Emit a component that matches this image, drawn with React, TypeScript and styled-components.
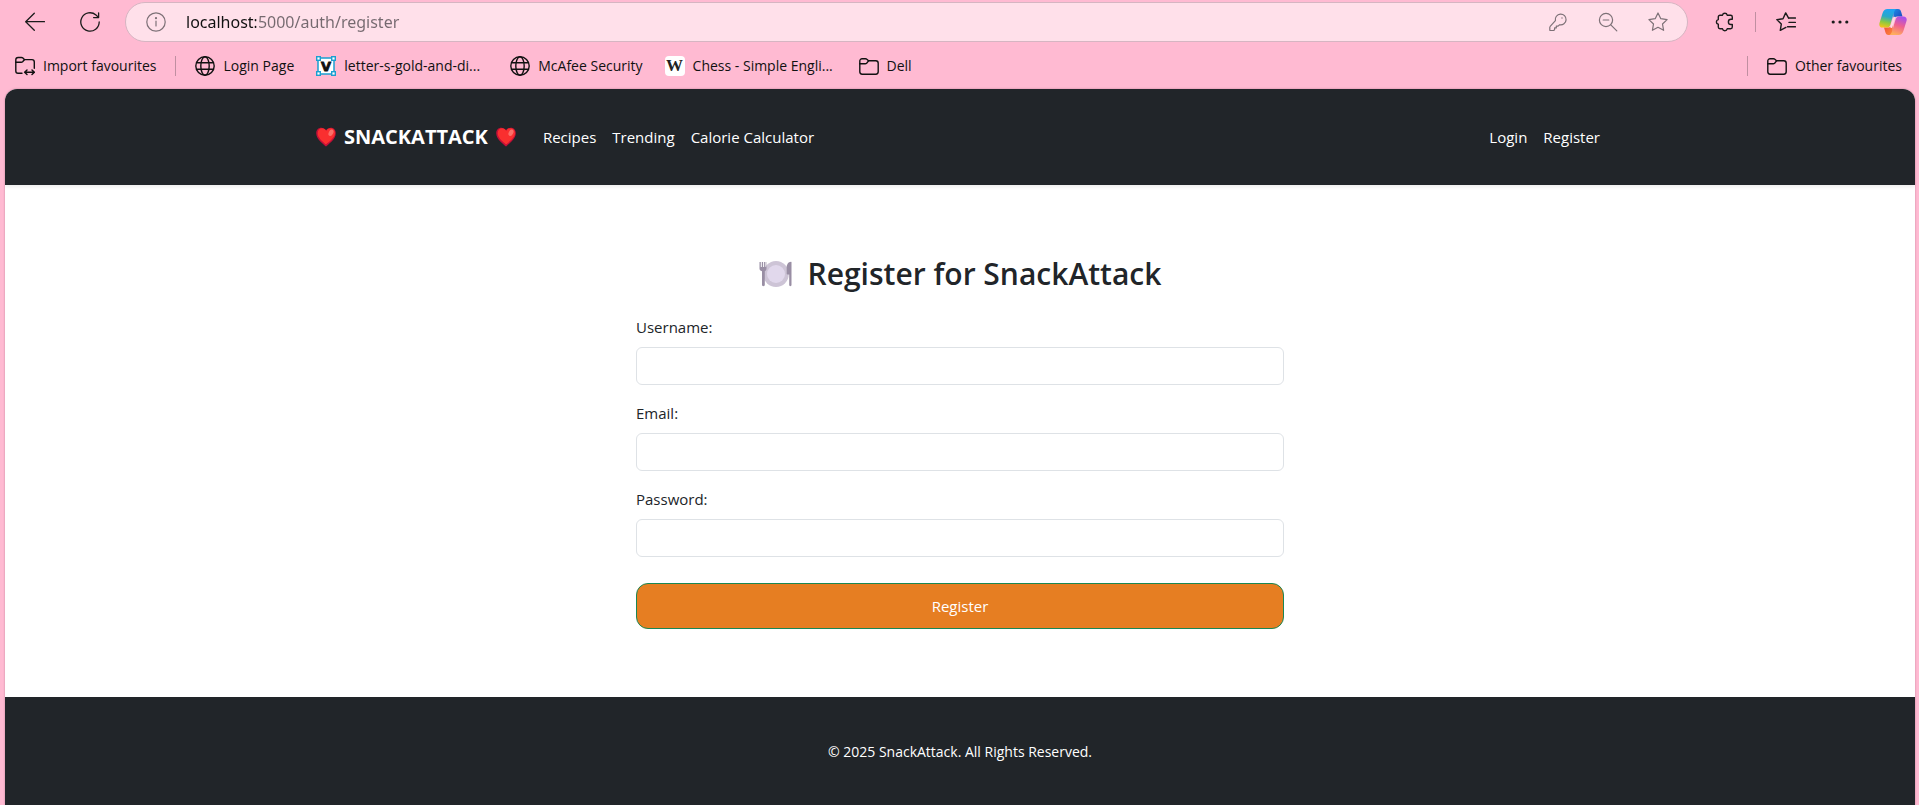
import React from "react";
import styled, { createGlobalStyle } from "styled-components";

const GlobalStyle = createGlobalStyle`
  *, *::before, *::after { box-sizing: border-box; }
  body {
    margin: 0;
    background: #ffbad2;
    color: #212529;
    font-family: "Segoe UI", "Open Sans", "Noto Sans", sans-serif;
    font-size: 15px;
    line-height: 24px;
  }
  svg { display: block; flex: none; }
`;

/* ---------- browser window ---------- */

const Window = styled.div`
  display: flex;
  flex-direction: column;
  min-height: 100vh;
`;

const Toolbar = styled.div`
  display: flex;
  align-items: center;
  padding: 2px 12px 0 25px;
  color: #1b1b1b;
`;

const IconButton = styled.button<{ $after?: number }>`
  display: flex;
  flex: none;
  padding: 0;
  margin-right: ${(p) => p.$after ?? 0}px;
  border: 0;
  background: none;
  color: inherit;
`;

const AddressBar = styled.div`
  display: flex;
  flex: 1;
  align-items: center;
  height: 40px;
  margin-right: 27px;
  padding: 0 19px 0 20px;
  border: 1px solid #d6b5c2;
  border-radius: 20px;
  background: #ffe0ea;
  color: #7d7177;
`;

const AddressInput = styled.input`
  flex: 1;
  min-width: 0;
  padding: 0;
  border: 0;
  outline: 0;
  background: linear-gradient(90deg, #111 0 70px, #75696f 70px);
  background-clip: text;
  -webkit-background-clip: text;
  color: transparent;
  font: 16px/24px "Segoe UI", "Noto Sans", sans-serif;
`;

const Separator = styled.span<{ $gap: number }>`
  flex: none;
  width: 1px;
  height: 20px;
  margin: 0 ${(p) => p.$gap}px;
  background: #c08fa1;
`;

const Favourites = styled.nav`
  display: flex;
  align-items: center;
  height: 47px;
  padding: 1px 17px 0 15px;
`;

const FavouriteList = styled.div`
  display: flex;
  flex: 1;
  gap: 22px;
`;

const Favourite = styled.a`
  display: flex;
  align-items: center;
  gap: 8px;
  color: #111;
  font-size: 14px;
  line-height: 20px;
  text-decoration: none;
  white-space: nowrap;
`;

const LongLabel = styled.span`
  width: 144px;
`;

const SiteBadge = styled.span`
  display: flex;
  align-items: center;
  justify-content: center;
  width: 20px;
  height: 20px;
  border-radius: 4px;
  background: #fff;
  color: #222;
  font: 700 17px/20px "Liberation Serif", serif;
`;

/* ---------- site ---------- */

const Page = styled.div`
  display: flex;
  flex: 1;
  flex-direction: column;
  margin: 0 4px 0 5px;
  overflow: hidden;
  border-radius: 12px 12px 0 0;
  background: #fff;
  box-shadow: 0 0 2px rgba(90, 30, 60, 0.4);
`;

const Header = styled.header`
  display: flex;
  justify-content: center;
  background: #212529;
  box-shadow: 0 2px 4px rgba(0, 0, 0, 0.08);
`;

const HeaderInner = styled.div`
  display: flex;
  flex: 1;
  align-items: center;
  max-width: 1320px;
  height: 96px;
  padding: 0 20px 0 16px;
`;

const Brand = styled.a`
  display: flex;
  align-items: center;
  gap: 8px;
  margin-right: 27px;
  color: #fff;
  font-size: 20px;
  font-weight: 700;
  text-decoration: none;
`;

const Links = styled.nav<{ $end?: boolean }>`
  display: flex;
  gap: 16px;
  margin-left: ${(p) => (p.$end ? "auto" : "0")};
`;

const NavLink = styled.a`
  color: #fff;
  text-decoration: none;
  white-space: nowrap;
`;

const Main = styled.main`
  display: flex;
  justify-content: center;
  padding: 68px 16px;
`;

const Form = styled.form`
  display: flex;
  flex: 1;
  flex-direction: column;
  gap: 16px;
  max-width: 648px;
`;

const Title = styled.h2`
  display: flex;
  align-items: center;
  justify-content: center;
  gap: 16px;
  margin: 0 0 6px;
  padding-top: 2px;
  font-size: 30px;
  font-weight: 600;
  line-height: 38px;
`;

const Field = styled.div`
  display: flex;
  flex-direction: column;
  gap: 8px;
`;

const TextInput = styled.input`
  height: 38px;
  padding: 6px 12px;
  border: 1px solid #dee2e6;
  border-radius: 6px;
  background: #fff;
  font: inherit;
`;

const SubmitButton = styled.button`
  height: 46px;
  margin-top: 10px;
  border: 1px solid #198754;
  border-radius: 12px;
  background: #e67e22;
  color: #fff;
  font: inherit;
`;

const Footer = styled.footer`
  flex: 1;
  padding: 44px 16px 32px;
  background: #212529;
  color: #fff;
  font-size: 14px;
  line-height: 22px;
  text-align: center;
`;

/* ---------- icons ---------- */

const Icon = ({ size = 20, width = 1.3, children }: { size?: number; width?: number; children: React.ReactNode }) => (
  <svg width={size} height={size} viewBox="0 0 20 20" fill="none" stroke="currentColor" strokeWidth={width} strokeLinecap="round" strokeLinejoin="round" aria-hidden="true">
    {children}
  </svg>
);

const BackIcon = () => (
  <Icon>
    <path d="M9.3 1.2.7 9.7l8.6 8.5M.9 9.7h18.6" />
  </Icon>
);

const ReloadIcon = () => (
  <Icon>
    <path d="M19.2 10A9.2 9.2 0 1 1 16 3l2.4 2.4M18.6.8v4.8h-5" />
  </Icon>
);

const InfoIcon = () => (
  <Icon width={1.2}>
    <circle cx="10" cy="10" r="9.2" />
    <path d="M10 9v5" />
    <circle cx="10" cy="6.2" r=".5" fill="currentColor" />
  </Icon>
);

const KeyIcon = () => (
  <Icon width={1.2}>
    <path d="M7.4 8.6a5.4 5.4 0 1 1 4.2 4.2l-1.5 1.3H8.3v1.8H6.6v1.7l-.9.9H2.4a.6.6 0 0 1-.6-.6v-2.6c0-.5.1-.7.4-1z" />
    <circle cx="14" cy="6" r=".7" fill="currentColor" stroke="none" />
  </Icon>
);

const ZoomOutIcon = () => (
  <Icon width={1.2}>
    <circle cx="8" cy="8" r="6.6" />
    <path d="m12.8 12.8 6 6M5.2 8h5.6" />
  </Icon>
);

const StarIcon = () => (
  <Icon width={1.2}>
    <path d="m10 1 2.8 5.7 6.3.9-4.6 4.4 1.1 6.3-5.6-3-5.6 3L5.500 12 .9 7.600l6.300-.9z" />
  </Icon>
);

const PuzzleIcon = () => (
  <Icon width={1.4}>
    <path d="M5 3.200H7.500a2.400 2.400 0 0 1 4.700 0H15.600a1.700 1.700 0 0 1 1.700 1.700V7.300h-1.300a2.600 2.600 0 0 0 0 5.200h1.300v2.600a1.700 1.700 0 0 1-1.700 1.700H12.200a2.400 2.400 0 0 1-4.700 0H5a1.700 1.700 0 0 1-1.700-1.700V12.300a2.400 2.400 0 0 1 0-4.700V4.900a1.700 1.700 0 0 1 1.700-1.700z" />
  </Icon>
);

const FavouritesIcon = () => (
  <Icon width={1.4}>
    <path d="M12.600 6.200 9.700.9 7 6.700l-6.200.9 4.500 4.500-1 6.300 5.600-3" />
    <path d="M13 6h6.400M13 10.400h6.400M11.500 14.800h7.900" />
  </Icon>
);

const MoreIcon = () => (
  <svg width="18" height="20" viewBox="0 0 18 20" fill="currentColor" aria-hidden="true">
    <circle cx="2.200" cy="10" r="1.600" />
    <circle cx="9" cy="10" r="1.600" />
    <circle cx="15.800" cy="10" r="1.600" />
  </svg>
);

const CopilotIcon = () => (
  <svg width="28" height="28" viewBox="0 0 28 28" aria-hidden="true">
    <defs>
      <linearGradient id="cpLeft" x1="0.5" y1="0" x2="0.3" y2="1">
        <stop offset="0" stopColor="#1fa2f2" />
        <stop offset=".4" stopColor="#2aa8c8" />
        <stop offset=".72" stopColor="#8fc93f" />
        <stop offset="1" stopColor="#f3c518" />
      </linearGradient>
      <linearGradient id="cpRight" x1="0.7" y1="0" x2="0.4" y2="1">
        <stop offset="0" stopColor="#a44df0" />
        <stop offset=".5" stopColor="#f0608f" />
        <stop offset="1" stopColor="#ffae5c" />
      </linearGradient>
      <linearGradient id="cpTop" x1="0" y1="0" x2="1" y2="1">
        <stop offset="0" stopColor="#1b8ee8" />
        <stop offset="1" stopColor="#1f3fb8" />
      </linearGradient>
      <linearGradient id="cpBottom" x1="0" y1="0" x2="1" y2="1">
        <stop offset="0" stopColor="#ee4a3a" />
        <stop offset="1" stopColor="#ff8a3c" />
      </linearGradient>
    </defs>
    <path d="M14 1h5c1.800 0 2.700 1.200 3.200 3l1.300 4.600h-5.300c-2 0-3 1-3.600 2.800z" fill="url(#cpTop)" />
    <path d="M14 27H9.500c-1.800 0-2.700-1.200-3.200-3L5 19.400h5c2 0 3-1 3.600-2.800z" fill="url(#cpBottom)" />
    <path d="M8.500 1h9c-1.400.6-2 1.800-2.500 3.400l-3.600 12c-.7 2.200-1.700 3.200-4 3.200H3.600C.8 19.600-.2 17.500.5 15L3.600 5C4.500 2.300 6 1 8.500 1z" fill="url(#cpLeft)" />
    <path d="M19.500 27h-9c1.400-.6 2-1.800 2.500-3.400l3.600-12c.7-2.200 1.700-3.200 4-3.200h3.800c2.800 0 3.800 2.100 3.100 4.600l-3.100 10c-.9 2.700-2.400 4-4.900 4z" fill="url(#cpRight)" />
    <path d="M15.200 9.800 12.300 19" stroke="#ffd9e6" strokeWidth="2" strokeLinecap="round" />
  </svg>
);

const FolderIcon = () => (
  <Icon width={1.4}>
    <path d="M.8 5A2.300 2.300 0 0 1 3.100 2.700h3.300c.6 0 1.100.2 1.500.6l1.600 1.500h7.300a2.400 2.400 0 0 1 2.400 2.400v8.600a2.400 2.400 0 0 1-2.400 2.400H3.200A2.400 2.400 0 0 1 .8 15.800z" />
    <path d="M.8 7.800h5.400c.6 0 1-.2 1.400-.6l2-2.300" />
  </Icon>
);

const ImportIcon = () => (
  <Icon width={1.400}>
    <path d="M7 17.300H3A2.300 2.300 0 0 1 .8 15V3.800A2.300 2.300 0 0 1 3.100 1.500h3.300c.6 0 1.100.2 1.500.6l1.500 1.500h7.600a2.300 2.300 0 0 1 2.300 2.300v6.400" />
    <path d="M.8 6.300h5.400c.6 0 1-.2 1.400-.6l1.800-2M9.600 16.300h9.800M12 14l-2.400 2.300L12 18.600M17 14l2.400 2.300-2.400 2.300" />
  </Icon>
);

const GlobeIcon = () => (
  <Icon width={1.4}>
    <circle cx="10" cy="10" r="9.200" />
    <ellipse cx="10" cy="10" rx="4.200" ry="9.200" />
    <path d="M1.600 6.700h16.800M1.600 13.300h16.800" />
  </Icon>
);

const VectorIcon = () => (
  <svg width="20" height="20" viewBox="0 0 20 20" aria-hidden="true">
    <rect x="2" y="2" width="16" height="16" fill="#fff" stroke="#1a9fd0" strokeWidth="1.500" />
    <text x="10" y="14.500" textAnchor="middle" fontFamily="DejaVu Sans, sans-serif" fontWeight="700" fontSize="13" fill="#111" stroke="#111" strokeWidth=".8">V</text>
    <g fill="#fff" stroke="#1a9fd0" strokeWidth="1.400">
      <rect x=".7" y=".7" width="3.600" height="3.600" />
      <rect x="15.700" y=".7" width="3.600" height="3.600" />
      <rect x=".7" y="15.700" width="3.600" height="3.600" />
      <rect x="15.700" y="15.700" width="3.600" height="3.600" />
    </g>
  </svg>
);

const Heart = () => (
  <svg width="20" height="20" viewBox="0 0 20 20" aria-hidden="true">
    <path d="M10 19.600C8 17.200.2 12.500.2 6.200.2 3 2.400.8 5.200.8 7.300.8 9 1.700 10 3.300 11 1.700 12.700.8 14.800.8c2.800 0 5 2.200 5 5.400 0 6.300-7.800 11-9.800 13.400z" fill="#c50f38" />
    <path d="M10 17.600C7.800 15.200 1.400 11.300 1.700 6 1.900 3.200 3.700 1.300 6 1.300c2 0 3.300 1 4.200 2.600.9-1.600 2.400-2.600 4.300-2.600 2.500 0 4.500 1.900 4.500 4.800 0 5.300-6.800 9.100-9 11.500z" fill="#f92f2f" />
    <ellipse cx="15" cy="5.800" rx="2.200" ry="3.400" transform="rotate(28 15 5.800)" fill="#fb7069" />
  </svg>
);

const Plate = () => (
  <svg width="33" height="28" viewBox="0 0 33 28" aria-hidden="true">
    <ellipse cx="17" cy="14" rx="12.800" ry="13" fill="#cdc4d6" />
    <circle cx="17" cy="14" r="9" fill="#e1d8ec" />
    <path d="M.5 2h1.300v5h1V2h1.300v5h1V2h1.300v5h.8V2h.3v6.500c0 1.500-.7 2.300-1.700 2.800V25c0 1.500-2.800 1.500-2.800 0V11.300C1.300 10.800.5 10 .5 8.500z" fill="#998ea4" />
    <path d="M32.500 2v23c0 1.500-2.300 1.500-2.300 0V14.500h-1.700c-.5 0-.8-.3-.8-.8V7.500c0-3 1.500-5.500 4.300-5.700z" fill="#998ea4" />
  </svg>
);

/* ---------- data ---------- */

const favourites = [
  { label: "Login Page", icon: <GlobeIcon /> },
  { label: "letter-s-gold-and-di...", icon: <VectorIcon />, long: true },
  { label: "McAfee Security", icon: <GlobeIcon /> },
  { label: "Chess - Simple Engli...", icon: <SiteBadge aria-hidden="true">W</SiteBadge>, long: true },
  { label: "Dell", icon: <FolderIcon /> },
];

const fields = [
  { id: "username", label: "Username:", type: "text" },
  { id: "email", label: "Email:", type: "email" },
  { id: "password", label: "Password:", type: "password" },
];

export default function App() {
  return (
    <Window>
      <GlobalStyle />
      <Toolbar>
        <IconButton $after={35} aria-label="Back"><BackIcon /></IconButton>
        <IconButton $after={25} aria-label="Refresh"><ReloadIcon /></IconButton>
        <AddressBar>
          <IconButton $after={20} aria-label="Site information"><InfoIcon /></IconButton>
          <AddressInput aria-label="Address" defaultValue="localhost:5000/auth/register" spellCheck={false} />
          <IconButton $after={30} aria-label="Saved passwords"><KeyIcon /></IconButton>
          <IconButton $after={30} aria-label="Zoom out"><ZoomOutIcon /></IconButton>
          <IconButton aria-label="Add to favourites"><StarIcon /></IconButton>
        </AddressBar>
        <IconButton aria-label="Extensions"><PuzzleIcon /></IconButton>
        <Separator $gap={20} />
        <IconButton $after={35} aria-label="Favourites"><FavouritesIcon /></IconButton>
        <IconButton $after={30} aria-label="Settings and more"><MoreIcon /></IconButton>
        <IconButton aria-label="Copilot"><CopilotIcon /></IconButton>
      </Toolbar>
      <Favourites aria-label="Favourites bar">
        <Favourite href="#"><ImportIcon />Import favourites</Favourite>
        <Separator $gap={19} />
        <FavouriteList>
          {favourites.map((f) => (
            <Favourite href="#" key={f.label}>
              {f.icon}
              {f.long ? <LongLabel>{f.label}</LongLabel> : f.label}
            </Favourite>
          ))}
        </FavouriteList>
        <Separator $gap={19} />
        <Favourite href="#"><FolderIcon />Other favourites</Favourite>
      </Favourites>

      <Page>
        <Header>
          <HeaderInner>
            <Brand href="#"><Heart />SNACKATTACK<Heart /></Brand>
            <Links>
              <NavLink href="#">Recipes</NavLink>
              <NavLink href="#">Trending</NavLink>
              <NavLink href="#">Calorie Calculator</NavLink>
            </Links>
            <Links $end>
              <NavLink href="#">Login</NavLink>
              <NavLink href="#">Register</NavLink>
            </Links>
          </HeaderInner>
        </Header>
        <Main>
          <Form onSubmit={(e) => e.preventDefault()}>
            <Title><Plate />Register for SnackAttack</Title>
            {fields.map((f) => (
              <Field key={f.id}>
                <label htmlFor={f.id}>{f.label}</label>
                <TextInput id={f.id} name={f.id} type={f.type} />
              </Field>
            ))}
            <SubmitButton type="submit">Register</SubmitButton>
          </Form>
        </Main>
        <Footer>© 2025 SnackAttack. All Rights Reserved.</Footer>
      </Page>
    </Window>
  );
}
